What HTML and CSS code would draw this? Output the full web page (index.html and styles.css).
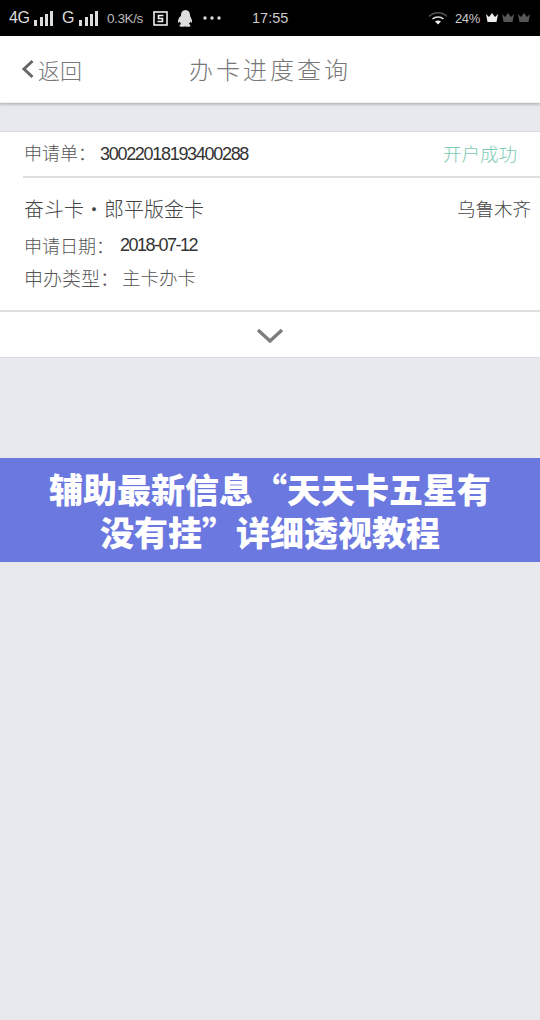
FILE: index.html
```html
<!DOCTYPE html>
<html lang="zh">
<head>
<meta charset="utf-8">
<title>办卡进度查询</title>
<link rel="stylesheet" href="styles.css">
</head>
<body>
<div class="status">
  <span class="net">4G</span>
  <svg class="bars b1" width="21" height="17" viewBox="0 0 21 17"><path d="M1 10h3v6H1zM7 7h3v9H7zM12 4h3v12h-3zM17 1h3v15h-3z" fill="#ddd"/></svg>
  <span class="net g">G</span>
  <svg class="bars b2" width="21" height="17" viewBox="0 0 21 17"><path d="M1 10h3v6H1zM7 7h3v9H7zM12 4h3v12h-3zM17 1h3v15h-3z" fill="#ddd"/></svg>
  <span class="speed">0.3K/s</span>
  <svg class="sbox" width="15" height="15" viewBox="0 0 15 15"><rect x="1" y="1" width="13" height="13" fill="none" stroke="#eee" stroke-width="1.6"/><path d="M10.5 4.5H5.5v3h4v3h-5" fill="none" stroke="#eee" stroke-width="1.6"/></svg>
  <svg class="qq" width="15" height="17" viewBox="0 0 15 17"><path d="M7.500 0C10.500 0 12 2.200 12 5c0 1 .3 1.600.8 2.500.8 1.500 1.600 3.500 1 5-.4.600-1.200-.3-1.600-1-.2 1.200-.8 2-1.500 2.600 1.200.4 1.800 1 1.800 1.700 0 .8-2 1.200-3.500.9-.9-.2-1.500-.3-2-.3s-1.100.1-2 .3C3.500 17 1.500 16.600 1.500 15.800c0-.7.600-1.300 1.800-1.700-.7-.6-1.300-1.400-1.500-2.600-.4.700-1.200 1.600-1.600 1-.6-1.500.2-3.500 1-5C2.700 6.600 3 6 3 5c0-2.800 1.500-5 4.500-5z" fill="#ddd"/></svg>
  <svg class="dots" width="18" height="4" viewBox="0 0 18 4"><circle cx="2" cy="2" r="1.700" fill="#ddd"/><circle cx="9" cy="2" r="1.700" fill="#ddd"/><circle cx="16" cy="2" r="1.700" fill="#ddd"/></svg>
  <span class="time">17:55</span>
  <svg class="wifi" width="20" height="14" viewBox="0 0 20 14"><path d="M1 5.500C6 .5 14 .5 19 5.500" fill="none" stroke="#555" stroke-width="1.300"/><path d="M4.500 8C7.500 5.300 12.500 5.300 15.500 8" fill="none" stroke="#ddd" stroke-width="1.600"/><path d="M10 13.500 7 10.500c1.700-1.400 4.300-1.400 6 0z" fill="#eee"/></svg>
  <span class="batt">24%</span>
  <svg class="crowns" width="46" height="13" viewBox="0 0 46 13"><path d="M1 2l3 3 3-4 3 4 3-3-1.500 8h-9z" fill="#eee"/><path d="M17 2l3 3 3-4 3 4 3-3-1.500 8h-9z" fill="#555"/><path d="M33 2l3 3 3-4 3 4 3-3-1.500 8h-9z" fill="#555"/></svg>
</div>

<header class="topbar">
  <div class="back">
    <svg class="chev" width="14" height="20" viewBox="0 0 14 20"><path d="M11.500 2 3 10l8.500 8" fill="none" stroke="#666" stroke-width="3"/></svg>
    <span class="back-text">返回</span>
  </div>
  <h1 class="title">办卡进度查询</h1>
</header>

<section class="card">
  <div class="order-row">
    <span class="order-label">申请单：<span class="digits order-no">30022018193400288</span></span>
    <span class="state">开户成功</span>
  </div>
  <div class="details">
    <div class="line line-name">
      <span class="name">奋斗卡·郎平版金卡</span>
      <span class="city">乌鲁木齐</span>
    </div>
    <div class="line line-date">申请日期：<span class="digits date">2018-07-12</span></div>
    <div class="line line-type">申办类型：<span class="kind">主卡办卡</span></div>
  </div>
  <div class="expand">
    <svg width="28" height="15" viewBox="0 0 28 15"><path d="M2 2l12 11L26 2" fill="none" stroke="#7d7d7d" stroke-width="3.400"/></svg>
  </div>
</section>

<div class="banner">辅助最新信息“天天卡五星有<br>没有挂”详细透视教程</div>
</body>
</html>
```

FILE: styles.css
```css
* { box-sizing: border-box; }
html, body { margin: 0; padding: 0; }
body {
  width: 540px;
  height: 1020px;
  overflow: hidden;
  background: #e8e8ef;
  font-family: "Noto Sans CJK SC", "Noto Sans", sans-serif;
  color: #444;
}

.status {
  height: 36px;
  background: #000;
  color: #ddd;
  display: flex;
  align-items: center;
  padding-left: 9px;
  font-family: "Liberation Sans", sans-serif;
}
.net { font-size: 16px; width: 18px; letter-spacing: -0.4px; }
.net.g { width: 10px; margin-left: 8px; }
.bars { margin-left: 6px; }
.speed { margin-left: 8px; width: 40px; font-size: 13.500px; font-weight: 300; color: #bbb; letter-spacing: -0.4px; }
.sbox { margin-left: 6px; }
.qq { margin-left: 10px; }
.dots { margin-left: 10px; }
.time { margin-left: 31px; width: 36px; font-size: 14.500px; color: #ccc; }
.wifi { margin-left: 140px; }
.batt { margin-left: 7px; width: 25px; font-size: 13px; color: #ccc; letter-spacing: -0.4px; }
.crowns { margin-left: 5px; }

.topbar {
  height: 67px;
  background: #fff;
  border-bottom: 1px solid #f0f0f0;
  box-shadow: 0 2px 2px #bdbdc2;
  display: flex;
  align-items: center;
  justify-content: center;
  position: relative;
}
.back {
  position: absolute;
  left: 21px;
  top: 0;
  height: 66px;
  display: flex;
  align-items: center;
  gap: 3px;
}
.back-text { font-size: 22px; font-weight: 300; color: #777; line-height: 1; }
.title {
  margin: 0;
  font-size: 24px;
  font-weight: 300;
  letter-spacing: 3px;
  color: #777;
  line-height: 1;
}

.card {
  margin-top: 28px;
  background: #fff;
  border-top: 1px solid #dcdcdc;
  border-bottom: 1px solid #dcdcdc;
}
.order-row {
  height: 46px;
  margin-left: 23px;
  padding: 0 23px 2px 1px;
  border-bottom: 2px solid #dedede;
  display: flex;
  align-items: center;
  justify-content: space-between;
}
.order-label { font-size: 18px; font-weight: 300; color: #555; line-height: 1; }
.digits {
  font-family: "Liberation Sans", sans-serif;
  font-size: 18px;
  letter-spacing: -1.300px;
  color: #333;
}
.order-no { margin-left: 4px; }
.state { font-size: 18.500px; font-weight: 300; color: #7ccbb6; line-height: 1; }

.details { padding: 14px 9px 18px 24px; }
.line { display: flex; align-items: center; font-weight: 300; color: #555; }
.line-name { height: 32px; justify-content: space-between; color: #444; }
.name { font-size: 20px; }
.city { font-size: 18.500px; }
.line-date { height: 36px; margin-top: 3px; font-size: 18px; }
.date { margin-left: 6px; letter-spacing: -1.500px; }
.line-type { height: 30px; margin-top: -1px; font-size: 19px; }
.kind { margin-left: 3px; font-size: 18.500px; }

.expand {
  height: 47px;
  padding-top: 2px;
  border-top: 2px solid #dedede;
  display: flex;
  align-items: center;
  justify-content: center;
}

.banner {
  margin-top: 100px;
  height: 104px;
  padding-top: 9px;
  background: #6b78e0;
  color: #fff;
  text-align: center;
  font-size: 34px;
  font-weight: 900;
  line-height: 43px;
}
```
